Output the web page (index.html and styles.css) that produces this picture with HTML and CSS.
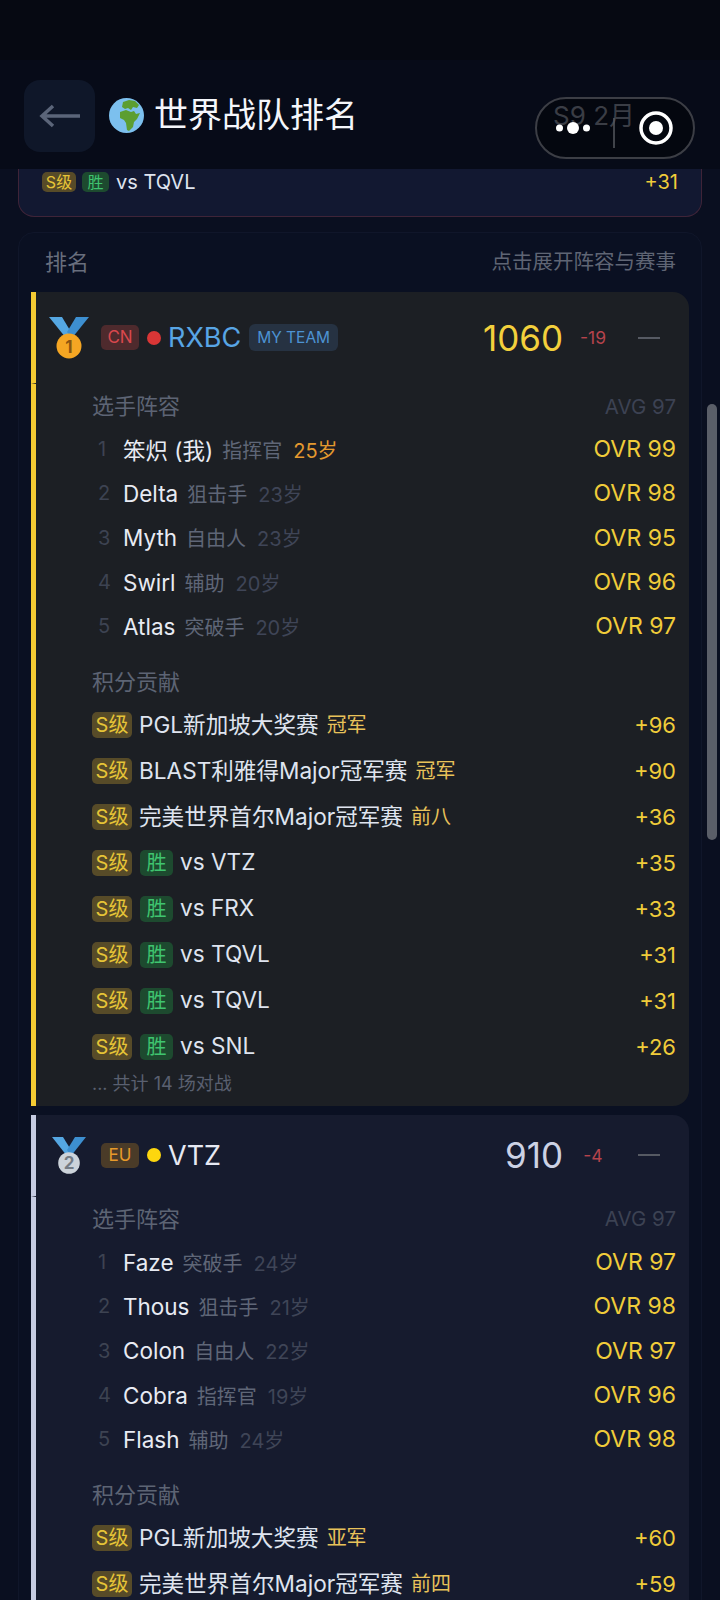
FILE: index.html
```html
<!DOCTYPE html>
<html lang="zh-CN">
<head>
  <meta charset="UTF-8">
  <meta name="viewport" content="width=device-width, initial-scale=1.0">
  <title>世界战队排名</title>
  <link rel="stylesheet" href="styles.css">
</head>
<body>

  <div class="status"></div>

  <div class="topbar">
    <div class="back">
      <svg width="42" height="24" viewBox="0 0 42 24"><path d="M41 12H3M14 2 3 12l11 10" fill="none" stroke="#5b6579" stroke-width="3.5"/></svg>
    </div>
    <svg class="globe" width="35" height="35" viewBox="0 0 35 35">
      <circle cx="17.5" cy="17.5" r="17.5" fill="#7cc0ee"/>
      <path d="M14 4l6-2 6 1 4 4-2 3-4-1-2 3-3-2-3 1-3-2z" fill="#5c9e31"/>
      <path d="M11 14l6-2 5 2 3-1 2 3 4-1-3 6-3 3-1 5-4 4-2-1-1-7-2-3-4-2z" fill="#5c9e31"/>
    </svg>
    <div class="page-title">世界战队排名</div>
    <div class="season">S9 2月</div>
  </div>

  <div class="capsule">
    <svg width="160" height="62" viewBox="0 0 160 62">
      <circle cx="24.500" cy="31" r="3.500" fill="#fff"/>
      <circle cx="38" cy="31" r="6" fill="#fff"/>
      <circle cx="51.500" cy="31" r="3.500" fill="#fff"/>
      <path d="M79 21v30" stroke="#55585f" stroke-width="1.500"/>
      <circle cx="121" cy="31" r="15" fill="none" stroke="#fff" stroke-width="3.500"/>
      <circle cx="121" cy="31" r="7" fill="#fff"/>
    </svg>
  </div>

  <div class="summary">
    <div class="points-row">
      <span class="tag tag-s tag-sm">S级</span>
      <span class="tag tag-win tag-sm">胜</span>
      <span class="points-name">vs TQVL</span>
      <span class="points-val">+31</span>
    </div>
  </div>

  <div class="board">
    <div class="board-head">
      <span class="board-title">排名</span>
      <span class="board-hint">点击展开阵容与赛事</span>
    </div>

    <div class="team team-gold">
      <div class="team-head">
        <svg class="medal" width="40" height="42" viewBox="0 0 40 42">
          <path d="M0 0h13l9 15-5 6z" fill="#55a7e2"/>
          <path d="M40 0H27l-9 15 5 6z" fill="#3d8fd0"/>
          <circle cx="20" cy="29" r="12.500" fill="#f5a623"/>
          <text x="20" y="35.500" class="medal-num" fill="#8a5410">1</text>
        </svg>
        <span class="region region-cn">CN</span>
        <span class="dot dot-red"></span>
        <span class="team-name team-name-me">RXBC</span>
        <span class="my-team">MY TEAM</span>
        <span class="score score-gold">1060</span>
        <span class="delta">-19</span>
        <span class="toggle"></span>
      </div>
      <div class="team-body">
        <div class="section-row">
          <span class="section-title">选手阵容</span>
          <span class="avg">AVG 97</span>
        </div>
        <div class="player"><span class="idx">1</span><span class="pname">笨炽 (我)</span><span class="role">指挥官</span><span class="age age-hot">25岁</span><span class="ovr">OVR 99</span></div>
        <div class="player"><span class="idx">2</span><span class="pname">Delta</span><span class="role">狙击手</span><span class="age">23岁</span><span class="ovr">OVR 98</span></div>
        <div class="player"><span class="idx">3</span><span class="pname">Myth</span><span class="role">自由人</span><span class="age">23岁</span><span class="ovr">OVR 95</span></div>
        <div class="player"><span class="idx">4</span><span class="pname">Swirl</span><span class="role">辅助</span><span class="age">20岁</span><span class="ovr">OVR 96</span></div>
        <div class="player"><span class="idx">5</span><span class="pname">Atlas</span><span class="role">突破手</span><span class="age">20岁</span><span class="ovr">OVR 97</span></div>

        <div class="section-row section-gap">
          <span class="section-title">积分贡献</span>
        </div>
        <div class="points-row"><span class="tag tag-s">S级</span><span class="points-name">PGL新加坡大奖赛</span><span class="result">冠军</span><span class="points-val">+96</span></div>
        <div class="points-row"><span class="tag tag-s">S级</span><span class="points-name">BLAST利雅得Major冠军赛</span><span class="result">冠军</span><span class="points-val">+90</span></div>
        <div class="points-row"><span class="tag tag-s">S级</span><span class="points-name">完美世界首尔Major冠军赛</span><span class="result">前八</span><span class="points-val">+36</span></div>
        <div class="points-row"><span class="tag tag-s">S级</span><span class="tag tag-win">胜</span><span class="points-name">vs VTZ</span><span class="points-val">+35</span></div>
        <div class="points-row"><span class="tag tag-s">S级</span><span class="tag tag-win">胜</span><span class="points-name">vs FRX</span><span class="points-val">+33</span></div>
        <div class="points-row"><span class="tag tag-s">S级</span><span class="tag tag-win">胜</span><span class="points-name">vs TQVL</span><span class="points-val">+31</span></div>
        <div class="points-row"><span class="tag tag-s">S级</span><span class="tag tag-win">胜</span><span class="points-name">vs TQVL</span><span class="points-val">+31</span></div>
        <div class="points-row"><span class="tag tag-s">S级</span><span class="tag tag-win">胜</span><span class="points-name">vs SNL</span><span class="points-val">+26</span></div>
        <div class="more">... 共计 14 场对战</div>
      </div>
    </div>

    <div class="team team-silver">
      <div class="team-head">
        <svg class="medal" width="40" height="37" viewBox="0 0 40 37">
          <path d="M3 0h11l8 13-4 6z" fill="#55a7e2"/>
          <path d="M37 0H26l-8 13 4 6z" fill="#3d8fd0"/>
          <circle cx="20" cy="26" r="10.800" fill="#ccd3da"/>
          <text x="20" y="31.500" class="medal-num" fill="#747c85">2</text>
        </svg>
        <span class="region region-eu">EU</span>
        <span class="dot dot-yellow"></span>
        <span class="team-name">VTZ</span>
        <span class="score">910</span>
        <span class="delta">-4</span>
        <span class="toggle"></span>
      </div>
      <div class="team-body">
        <div class="section-row">
          <span class="section-title">选手阵容</span>
          <span class="avg">AVG 97</span>
        </div>
        <div class="player"><span class="idx">1</span><span class="pname">Faze</span><span class="role">突破手</span><span class="age">24岁</span><span class="ovr">OVR 97</span></div>
        <div class="player"><span class="idx">2</span><span class="pname">Thous</span><span class="role">狙击手</span><span class="age">21岁</span><span class="ovr">OVR 98</span></div>
        <div class="player"><span class="idx">3</span><span class="pname">Colon</span><span class="role">自由人</span><span class="age">22岁</span><span class="ovr">OVR 97</span></div>
        <div class="player"><span class="idx">4</span><span class="pname">Cobra</span><span class="role">指挥官</span><span class="age">19岁</span><span class="ovr">OVR 96</span></div>
        <div class="player"><span class="idx">5</span><span class="pname">Flash</span><span class="role">辅助</span><span class="age">24岁</span><span class="ovr">OVR 98</span></div>

        <div class="section-row section-gap">
          <span class="section-title">积分贡献</span>
        </div>
        <div class="points-row"><span class="tag tag-s">S级</span><span class="points-name">PGL新加坡大奖赛</span><span class="result">亚军</span><span class="points-val">+60</span></div>
        <div class="points-row"><span class="tag tag-s">S级</span><span class="points-name">完美世界首尔Major冠军赛</span><span class="result">前四</span><span class="points-val">+59</span></div>
      </div>
    </div>
  </div>

  <div class="scrollbar"></div>

</body>
</html>
```

FILE: styles.css
```css
html, body {
  margin: 0;
  height: 1600px;
  overflow: hidden;
}

body {
  position: relative;
  background: #0a0f20;
  font-family: Inter, "Noto Sans CJK SC", sans-serif;
  color: #e0e4ef;
}

.status {
  height: 60px;
  background: #060912;
}

.topbar {
  height: 109px;
  box-sizing: border-box;
  padding: 20px 85px 0 24px;
  display: flex;
  align-items: flex-start;
  background: #070b18;
}

.back {
  width: 71px;
  height: 72px;
  flex-shrink: 0;
  border-radius: 16px;
  background: #0f1729;
  display: flex;
  align-items: center;
  justify-content: center;
}

.globe {
  margin: 18px 10px 0 14px;
  flex-shrink: 0;
}

.page-title {
  font-size: 34px;
  line-height: 70px;
  color: #f4f6fb;
}

.season {
  margin-left: auto;
  font-size: 26px;
  line-height: 72px;
  color: #595e6a;
}

.capsule {
  position: absolute;
  left: 535px;
  top: 97px;
  width: 160px;
  height: 62px;
  box-sizing: border-box;
  border: 2px solid #3c3e45;
  border-radius: 31px;
  background: rgba(0, 0, 0, 0.35);
}

.capsule svg {
  display: block;
  margin: -2px;
}

.summary {
  height: 48px;
  margin: 0 18px;
  box-sizing: border-box;
  padding: 0 23px 0 23px;
  background: #121831;
  border: 1px solid #3f2438;
  border-top: none;
  border-radius: 0 0 16px 16px;
}

.summary .points-row {
  height: 24px;
  padding-top: 1px;
}

.board {
  margin: 15px 18px 0;
  padding: 0 12px;
  height: 1400px;
  box-sizing: border-box;
  background: #0a1022;
  border: 1px solid #10162a;
  border-radius: 16px;
}

.board-head {
  height: 59px;
  box-sizing: border-box;
  padding: 0 13px 6px 14px;
  display: flex;
  align-items: center;
  justify-content: space-between;
}

.board-title {
  font-size: 22px;
  color: #686e7d;
}

.board-hint {
  font-size: 20.5px;
  color: #5f6574;
}

.team {
  margin-bottom: 9px;
}

.team-gold {
  --bar: #f5cb33;
  --card: #1c1f24;
}

.team-silver {
  --bar: #c6cce2;
  --card: #161b2e;
}

.team-head {
  height: 81px;
  padding: 0 29px 0 13px;
  display: flex;
  align-items: center;
  background: var(--card);
  border-left: 5px solid var(--bar);
  border-bottom: 1px solid var(--card);
  border-radius: 0 16px 0 0;
}

.team-gold .team-head {
  height: 91px;
}

.team-body {
  padding: 0 13px 9px 56px;
  background: var(--card);
  border-left: 5px solid var(--bar);
  border-radius: 0 0 16px 0;
}

.medal {
  flex-shrink: 0;
  margin-right: 12px;
}

.medal-num {
  font-size: 17px;
  font-weight: 700;
  text-anchor: middle;
}

.region {
  width: 38px;
  height: 25px;
  border-radius: 5px;
  font-size: 17px;
  line-height: 25px;
  text-align: center;
}

.region-cn {
  background: #4e2a2d;
  color: #d9484d;
}

.region-eu {
  background: #4a3b28;
  color: #e89a2a;
}

.dot {
  width: 14px;
  height: 14px;
  margin: 0 7px 0 8px;
  border-radius: 50%;
}

.dot-red { background: #d93636; }
.dot-yellow { background: #fdd60e; }

.team-name {
  font-size: 27px;
  color: #e6e9f3;
}

.team-name-me {
  color: #58a5e5;
}

.my-team {
  margin-left: 8px;
  padding: 0 8px;
  height: 27px;
  border-radius: 6px;
  background: #263242;
  color: #4d93d2;
  font-size: 15.5px;
  line-height: 27px;
}

.score {
  margin-left: auto;
  font-size: 35px;
  color: #ccd2e4;
}

.score-gold {
  color: #f3d03c;
}

.delta {
  width: 60px;
  text-align: center;
  font-size: 17.5px;
  color: #b5434c;
}

.toggle {
  width: 22px;
  height: 2px;
  margin-left: 15px;
  background: #565a63;
}

.section-row {
  height: 40px;
  margin-bottom: 3px;
  display: flex;
  align-items: center;
  justify-content: space-between;
}

.section-gap {
  margin-top: 11.5px;
  margin-bottom: 1px;
}

.section-title {
  font-size: 22px;
  color: #5d6474;
}

.avg {
  margin-top: 4px;
  font-size: 20.5px;
  color: #3c4253;
}

.player {
  height: 44.300px;
  display: flex;
  align-items: center;
}

.idx {
  width: 31px;
  padding-left: 6px;
  box-sizing: border-box;
  font-size: 20px;
  color: #3d4352;
}

.pname {
  font-size: 22.5px;
  color: #e8ebf3;
}

.role {
  margin-left: 9px;
  font-size: 20px;
  color: #5f6677;
}

.age {
  margin-left: 11px;
  font-size: 20px;
  color: #3f4557;
}

.age-hot {
  color: #e3992f;
}

.ovr {
  margin-left: auto;
  font-size: 23px;
  color: #f0cc3a;
}

.points-row {
  height: 46px;
  display: flex;
  align-items: center;
}

.tag {
  height: 26px;
  margin-top: 2px;
  border-radius: 5px;
  font-size: 20px;
  line-height: 26px;
  text-align: center;
  margin-right: 8px;
  flex-shrink: 0;
}

.tag-s {
  width: 40px;
  background: #574b28;
  color: #e6c437;
}

.tag-win {
  width: 33px;
  background: #1d4a2f;
  color: #3fc46f;
}

.tag-sm {
  height: 20px;
  margin-top: 0;
  line-height: 20px;
  font-size: 16px;
  margin-right: 6px;
}

.tag-sm.tag-s { width: 34px; }
.tag-sm.tag-win { width: 27px; }

.points-name {
  margin-left: -1px;
  font-size: 22.6px;
  color: #dfe4ef;
}

.summary .points-name {
  font-size: 20px;
  margin-left: 1px;
}

.result {
  margin-left: 8px;
  font-size: 20px;
  color: #e8c25a;
}

.points-val {
  margin-left: auto;
  margin-top: 2px;
  font-size: 22px;
  color: #f0cc3a;
}

.summary .points-val {
  margin-top: 0;
  font-size: 20px;
}

.more {
  height: 26px;
  padding-top: 2px;
  font-size: 18px;
  line-height: 26px;
  color: #5a6070;
}

.scrollbar {
  position: absolute;
  left: 707px;
  top: 404px;
  width: 10px;
  height: 436px;
  border-radius: 5px;
  background: #5a5e68;
}
```
